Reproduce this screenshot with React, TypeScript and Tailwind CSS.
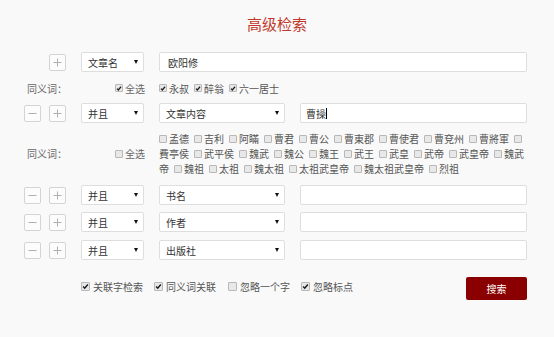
import React from 'react'

const font = "font-['Noto_Sans_CJK_SC','Noto_Sans',sans-serif]"

function Check({ on, big }: { on?: boolean; big?: boolean }) {
  return (
    <span
      className={`${
        big ? 'w-[9px] h-[9px]' : 'w-[8px] h-[8px]'
      } inline-flex shrink-0 items-center justify-center rounded-[1px] border border-[#b8b8b8] bg-[#e8e8e8]`}
    >
      {on && (
        <svg viewBox="0 0 8 8" className="h-[7px] w-[7px]">
          <path d="M1.3 4.1 L3.1 6 L6.7 1.7" fill="none" stroke="#1e1e1e" strokeWidth="1.7" />
        </svg>
      )}
    </span>
  )
}

function Item({ label, on, box = true }: { label?: string; on?: boolean; box?: boolean }) {
  return (
    <span className="flex items-center">
      {box && <Check on={on} />}
      {label && <span className={box ? 'ml-[2px]' : ''}>{label}</span>}
    </span>
  )
}

function PM({ kind }: { kind: 'plus' | 'minus' }) {
  return (
    <span className="flex h-[17px] w-[17px] shrink-0 items-center justify-center rounded-[2px] border border-[#d4d4d4] bg-[#fcfcfc]">
      <svg viewBox="0 0 9 9" className="h-[9px] w-[9px]">
        <path d="M0.5 4.5 H8.5" stroke="#b0b0b0" strokeWidth="1" />
        {kind === 'plus' && <path d="M4.5 0.5 V8.5" stroke="#b0b0b0" strokeWidth="1" />}
      </svg>
    </span>
  )
}

function Select({ text, wide }: { text: string; wide?: boolean }) {
  return (
    <span
      className={`${
        wide ? 'w-[126px]' : 'w-[63px]'
      } flex h-[20px] shrink-0 items-center justify-between rounded-[2px] border border-[#dedede] bg-white pl-[6px] pr-[5px] text-[#333]`}
    >
      <span>{text}</span>
      <span className="h-0 w-0 border-x-[2.5px] border-t-[4px] border-x-transparent border-t-[#111]" />
    </span>
  )
}

function Input({ value, wide, caret }: { value?: string; wide?: boolean; caret?: boolean }) {
  return (
    <span
      className={`${
        wide ? 'w-[368px] pl-[8px]' : 'w-[227px] pl-[5px]'
      } flex h-[20px] shrink-0 items-center rounded-[2px] border border-[#dedede] bg-white text-[#333]`}
    >
      {value}
      {caret && <span className="ml-[0px] h-[11px] w-px bg-black" />}
    </span>
  )
}

function Row({ field, caret, value }: { field: string; caret?: boolean; value?: string }) {
  return (
    <div className="flex items-center pl-[24px]">
      <PM kind="minus" />
      <span className="ml-[8px]">
        <PM kind="plus" />
      </span>
      <span className="ml-[15px]">
        <Select text="并且" />
      </span>
      <span className="ml-[15px]">
        <Select text={field} wide />
      </span>
      <span className="ml-[15px]">
        <Input value={value} caret={caret} />
      </span>
    </div>
  )
}

function SynLeft({ on }: { on?: boolean }) {
  return (
    <div className="flex w-[135px] shrink-0 items-center justify-between pl-[3px] pr-[14px] text-[#666]">
      <span>同义词：</span>
      <Item label="全选" on={on} />
    </div>
  )
}

const line1 = ['孟德', '吉利', '阿瞞', '曹君', '曹公', '曹東郡', '曹使君', '曹兗州', '曹將軍']
const line2 = ['武平侯', '魏武', '魏公', '魏王', '武王', '武皇', '武帝', '武皇帝', '魏武']
const line3 = ['魏祖', '太祖', '魏太祖', '太祖武皇帝', '魏太祖武皇帝', '烈祖']

export default function App() {
  return (
    <div className={`${font} h-[337px] w-[554px] overflow-hidden bg-[#f9f9f9] text-[10px] text-[#555]`}>
      <h1 className="mt-[14px] text-center text-[15px] leading-[20px] text-[#c0392b]">高级检索</h1>

      <div className="mt-[18px] flex items-center pl-[24px]">
        <span className="w-[17px]" />
        <span className="ml-[8px]">
          <PM kind="plus" />
        </span>
        <span className="ml-[15px]">
          <Select text="文章名" />
        </span>
        <span className="ml-[15px]">
          <Input value="欧阳修" wide />
        </span>
      </div>

      <div className="mt-[8px] flex h-[16px] items-center pl-[24px]">
        <SynLeft on />
        <div className="flex items-center gap-[5px]">
          <Item label="永叔" on />
          <Item label="醉翁" on />
          <Item label="六一居士" on />
        </div>
      </div>

      <div className="mt-[7px]">
        <Row field="文章内容" value="曹操" caret />
      </div>

      <div className="mt-[8px] flex items-center pl-[24px]">
        <SynLeft />
        <div className="flex flex-col leading-[15px]">
          <div className="flex h-[15px] items-center gap-[5px]">
            {line1.map((w) => (
              <Item key={w} label={w} />
            ))}
            <Item />
          </div>
          <div className="flex h-[15px] items-center gap-[5px]">
            <Item label="費亭侯" box={false} />
            {line2.map((w, i) => (
              <Item key={w + i} label={w} />
            ))}
          </div>
          <div className="flex h-[15px] items-center gap-[5px]">
            <Item label="帝" box={false} />
            {line3.map((w) => (
              <Item key={w} label={w} />
            ))}
          </div>
        </div>
      </div>

      <div className="mt-[9px]">
        <Row field="书名" />
      </div>
      <div className="mt-[7px]">
        <Row field="作者" />
      </div>
      <div className="mt-[8px]">
        <Row field="出版社" />
      </div>

      <div className="mt-[17px] flex items-start">
        <div className="ml-[81px] flex h-[18px] items-center text-[#555]">
          <span className="flex items-center">
            <Check on big />
            <span className="ml-[3px]">关联字检索</span>
          </span>
          <span className="ml-[11px] flex items-center">
            <Check on big />
            <span className="ml-[3px]">同义词关联</span>
          </span>
          <span className="ml-[12px] flex items-center">
            <Check big />
            <span className="ml-[3px]">忽略一个字</span>
          </span>
          <span className="ml-[11px] flex items-center">
            <Check on big />
            <span className="ml-[3px]">忽略标点</span>
          </span>
        </div>
        <button className="ml-auto mr-[27px] flex h-[23px] w-[61px] items-center justify-center rounded-[2px] bg-[#8a0000] text-[10px] text-white">
          搜索
        </button>
      </div>
    </div>
  )
}
